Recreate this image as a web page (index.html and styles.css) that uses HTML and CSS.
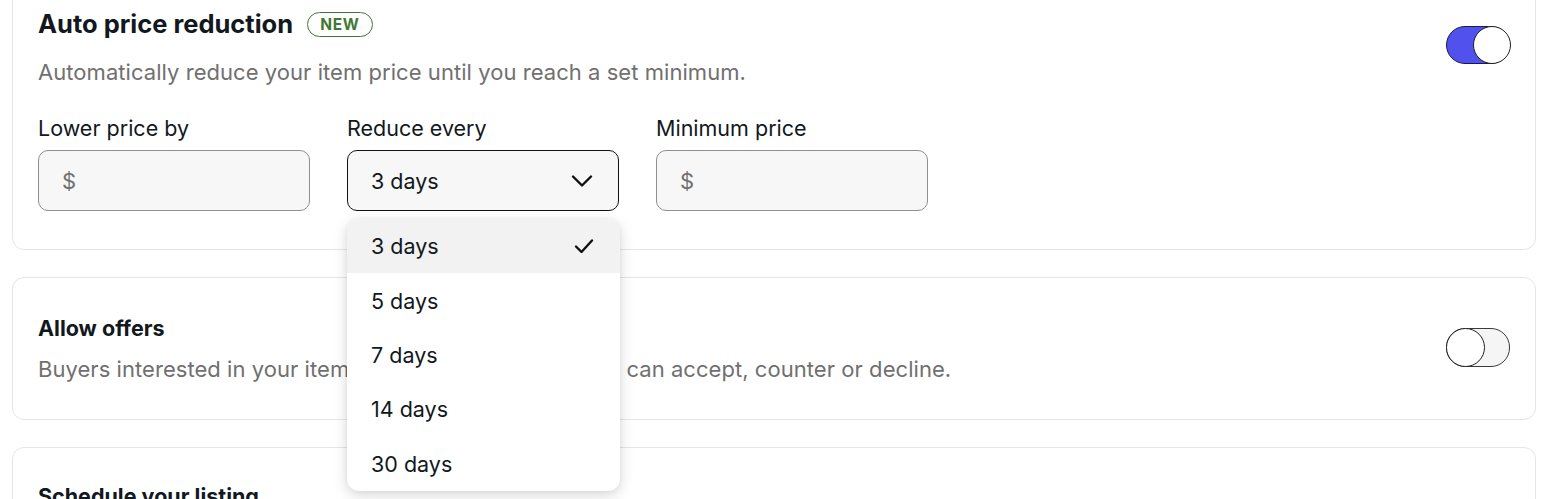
FILE: index.html
```html
<!DOCTYPE html>
<html lang="en">
<head>
<meta charset="utf-8">
<link rel="stylesheet" href="styles.css">
</head>
<body>
<div class="page">
  <section class="card card-auto">
    <div class="card-head">
      <div class="head-text">
        <div class="title-row">
          <h2 class="title">Auto price reduction</h2>
          <span class="badge">NEW</span>
        </div>
        <p class="desc">Automatically reduce your item price until you reach a set minimum.</p>
      </div>
      <div class="toggle toggle-on"><span class="knob"></span></div>
    </div>
    <div class="fields">
      <div class="field">
        <label class="label">Lower price by</label>
        <div class="input"><span class="prefix">$</span></div>
      </div>
      <div class="field field-select">
        <label class="label">Reduce every</label>
        <div class="input select">
          <span class="value">3 days</span>
          <svg class="chev" width="22" height="14" viewBox="0 0 22 14"><path d="M2 2.5 L11 11.5 L20 2.5" fill="none" stroke="#111" stroke-width="2.4" stroke-linecap="round" stroke-linejoin="round"/></svg>
        </div>
        <ul class="menu">
          <li class="opt opt-active"><span>3 days</span><svg class="check" width="20" height="16" viewBox="0 0 20 16"><path d="M2 8.5 L7.5 14 L18 2.5" fill="none" stroke="#111" stroke-width="2.4" stroke-linecap="round" stroke-linejoin="round"/></svg></li>
          <li class="opt"><span>5 days</span></li>
          <li class="opt"><span>7 days</span></li>
          <li class="opt"><span>14 days</span></li>
          <li class="opt"><span>30 days</span></li>
        </ul>
      </div>
      <div class="field">
        <label class="label">Minimum price</label>
        <div class="input"><span class="prefix">$</span></div>
      </div>
    </div>
  </section>

  <section class="card card-offers">
    <div class="card-head">
      <div class="head-text">
        <h3 class="subtitle">Allow offers</h3>
        <p class="desc">Buyers interested in your item can make you offers. You can accept, counter or decline.</p>
      </div>
      <div class="toggle toggle-off"><span class="knob"></span></div>
    </div>
  </section>

  <section class="card card-schedule">
    <h3 class="subtitle">Schedule your listing</h3>
  </section>
</div>
</body>
</html>
```

FILE: styles.css
```css
* { box-sizing: border-box; }
html, body { margin: 0; padding: 0; background: #fff; }
body {
  font-family: "Inter", "Open Sans", "Liberation Sans", sans-serif;
  color: #111820;
  overflow: hidden;
  height: 499px;
}
.page {
  padding: 0 11px 0 12px;
  margin-top: -20px;
  display: flex;
  flex-direction: column;
  gap: 27px;
}
.card {
  border: 1px solid #e5e5e5;
  border-radius: 12px;
  padding: 0 25px;
  background: #fff;
}
.card-auto { padding-top: 28px; padding-bottom: 38px; }
.card-offers { padding-top: 37px; padding-bottom: 36px; }
.card-schedule { padding-top: 35px; height: 90px; }
.card-head {
  display: flex;
  justify-content: space-between;
  align-items: flex-start;
}
.title-row { display: flex; align-items: center; gap: 14px; }
.title {
  margin: 0;
  font-size: 25.5px;
  font-weight: 700;
  line-height: 30px;
}
.badge {
  border: 1px solid #3e7a35;
  color: #3e7a35;
  border-radius: 13px;
  font-size: 15.5px;
  font-weight: 700;
  letter-spacing: 0.7px;
  padding: 2px 12px;
  line-height: 19px;
}
.desc {
  margin: 19px 0 0;
  font-size: 22px;
  line-height: 28px;
  letter-spacing: 0.05px;
  color: #707070;
}
.subtitle {
  margin: 0;
  font-size: 21.5px;
  font-weight: 700;
  line-height: 26px;
}
.card-offers .desc { margin-top: 14px; }
.toggle {
  width: 64px;
  height: 38px;
  border-radius: 19px;
  position: relative;
  flex: none;
}
.card-auto .toggle { margin-top: 17px; }
.toggle-on { background: #5151ee; border: 1.5px solid #1a1a50; }
.toggle-off { background: #f5f5f5; border: 1.5px solid #3a3a3a; margin-top: 13px; height: 39px; }
.knob {
  position: absolute;
  top: -1.5px;
  width: 38px;
  height: 38px;
  border-radius: 50%;
  background: #fff;
  border: 1.5px solid #222;
}
.toggle-off .knob { width: 39px; height: 39px; }
.toggle-on .knob { right: -1.5px; }
.toggle-off .knob { left: -1.5px; }
.fields {
  display: flex;
  gap: 37px;
  margin-top: 29px;
}
.field {
  width: 272px;
  display: flex;
  flex-direction: column;
  gap: 9px;
  position: relative;
}
.label {
  font-size: 21.5px;
  line-height: 26px;
  color: #111820;
}
.input {
  height: 61px;
  border: 1px solid #8f8f8f;
  border-radius: 10px;
  background: #f7f7f7;
  display: flex;
  align-items: center;
  padding: 0 23px;
}
.field-select .input { border-color: #111; }
.prefix { font-size: 22px; color: #707070; }
.select { justify-content: space-between; padding-right: 25px; }
.value { font-size: 21.5px; color: #111820; }
.menu {
  position: absolute;
  top: 104px;
  left: 0;
  width: 273px;
  margin: 0;
  padding: 0;
  list-style: none;
  background: #fff;
  border-radius: 12px;
  box-shadow: 0 4px 14px rgba(0,0,0,0.16), 0 0 4px rgba(0,0,0,0.05);
  overflow: hidden;
  z-index: 5;
}
.opt {
  height: 54.4px;
  display: flex;
  align-items: center;
  justify-content: space-between;
  padding: 0 26px 0 24px;
  font-size: 21.5px;
  color: #111820;
}
.opt-active { background: #f2f2f2; }
```
